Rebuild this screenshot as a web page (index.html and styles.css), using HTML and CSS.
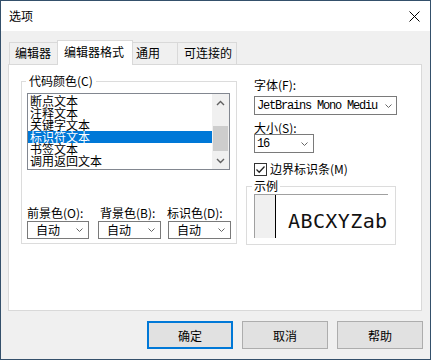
FILE: index.html
```html
<!DOCTYPE html>
<html lang="zh-CN">
<head>
<meta charset="utf-8">
<title>选项</title>
<link rel="stylesheet" href="styles.css">
</head>
<body>
<div class="window">
  <div class="titlebar">
    <span class="title">选项</span>
    <svg class="close" width="11" height="11" viewBox="0 0 11 11"><path d="M0.5 0.5L10.5 10.5M10.5 0.5L0.5 10.5" stroke="#000" stroke-width="1" fill="none"/></svg>
  </div>
  <div class="content">
    <div class="tabs">
      <div class="tab t1">编辑器</div>
      <div class="tab active t2">编辑器格式</div>
      <div class="tab t3">通用</div>
      <div class="tab t4">可连接的</div>
    </div>
    <div class="panel">
      <fieldset class="group colors">
        <legend>代码颜色(C)</legend>
        <div class="listbox">
          <ul class="items">
            <li>断点文本</li>
            <li>注释文本</li>
            <li>关键字文本</li>
            <li class="selected">标识符文本</li>
            <li>书签文本</li>
            <li>调用返回文本</li>
          </ul>
          <div class="scrollbar">
            <div class="sb-btn"><svg width="9" height="6" viewBox="0 0 9 6"><path d="M1 5L4.5 1.5L8 5" stroke="#606060" stroke-width="1.4" fill="none"/></svg></div>
            <div class="sb-track"><div class="sb-thumb"></div></div>
            <div class="sb-btn"><svg width="9" height="6" viewBox="0 0 9 6"><path d="M1 1L4.5 4.5L8 1" stroke="#606060" stroke-width="1.4" fill="none"/></svg></div>
          </div>
        </div>
        <div class="pickers">
          <div class="picker p1">
            <div class="plabel">前景色(O):</div>
            <div class="combo ccombo"><span>自动</span><svg width="7" height="4" viewBox="0 0 7 4"><path d="M0.5 0.5L3.5 3.5L6.5 0.5" stroke="#666" fill="none"/></svg></div>
          </div>
          <div class="picker p2">
            <div class="plabel">背景色(B):</div>
            <div class="combo ccombo"><span>自动</span><svg width="7" height="4" viewBox="0 0 7 4"><path d="M0.5 0.5L3.5 3.5L6.5 0.5" stroke="#666" fill="none"/></svg></div>
          </div>
          <div class="picker p3">
            <div class="plabel">标识色(D):</div>
            <div class="combo ccombo"><span>自动</span><svg width="7" height="4" viewBox="0 0 7 4"><path d="M0.5 0.5L3.5 3.5L6.5 0.5" stroke="#666" fill="none"/></svg></div>
          </div>
        </div>
      </fieldset>
      <div class="right">
        <div class="rlabel">字体(F):</div>
        <div class="combo fcombo"><span class="mono">JetBrains Mono Mediu</span><svg width="7" height="4" viewBox="0 0 7 4"><path d="M0.5 0.5L3.5 3.5L6.5 0.5" stroke="#666" fill="none"/></svg></div>
        <div class="rlabel size-label">大小(S):</div>
        <div class="combo scombo"><span class="mono">16</span><svg width="7" height="4" viewBox="0 0 7 4"><path d="M0.5 0.5L3.5 3.5L6.5 0.5" stroke="#666" fill="none"/></svg></div>
        <div class="check-row">
          <span class="checkbox"><svg width="11" height="11" viewBox="0 0 11 11"><path d="M1.5 5.5L4.2 8.2L9.5 2.5" stroke="#222" stroke-width="1.3" fill="none"/></svg></span>
          <span>边界标识条(M)</span>
        </div>
        <fieldset class="group sample">
          <legend>示例</legend>
          <div class="preview">
            <div class="gutter"></div>
            <div class="code">ABCXYZab</div>
          </div>
        </fieldset>
      </div>
    </div>
    <div class="buttons">
      <button class="btn default">确定</button>
      <button class="btn">取消</button>
      <button class="btn">帮助</button>
    </div>
  </div>
</div>
</body>
</html>
```
FILE: styles.css
```css
html, body {
  margin: 0;
  padding: 0;
  background: #fff;
}

.window {
  width: 431px;
  height: 360px;
  box-sizing: border-box;
  border: 1px solid #34506b;
  display: flex;
  flex-direction: column;
  font-family: "Noto Sans CJK SC", sans-serif;
  font-size: 12px;
  line-height: 14px;
  color: #000;
}

.titlebar {
  height: 30px;
  flex: none;
  background: #fff;
  display: flex;
  align-items: center;
  justify-content: space-between;
  padding: 0 10px 0 8px;
}

.title {
  line-height: 14px;
}

.content {
  flex: 1;
  background: #f0f0f0;
  padding: 9px 7px 0 7px;
  display: flex;
  flex-direction: column;
}

.tabs {
  display: flex;
  align-items: flex-end;
  height: 24px;
  padding-left: 1px;
  flex: none;
}

.tab {
  box-sizing: border-box;
  height: 22px;
  border: 1px solid #d9d9d9;
  border-bottom: none;
  background: #f0f0f0;
  line-height: 20px;
  white-space: nowrap;
}

.t1 { width: 50px; padding-left: 5px; }
.t2 { width: 76px; padding-left: 6px; margin-left: -2px; }
.t3 { width: 47px; padding-left: 4px; margin-left: -2px; }
.t4 { width: 60px; padding-left: 6px; margin-left: -1px; }

.tab.active {
  height: 25px;
  margin-bottom: -1px;
  background: #fff;
  line-height: 22px;
  position: relative;
  z-index: 2;
}

.panel {
  box-sizing: border-box;
  width: 414px;
  height: 247px;
  flex: none;
  border: 1px solid #d9d9d9;
  background: #fff;
  display: flex;
  align-items: flex-start;
  padding: 8px 0 0 12px;
  position: relative;
  z-index: 1;
}

.group {
  margin: 0;
  border: 1px solid #dcdcdc;
  min-width: 0;
  box-sizing: border-box;
}

.group legend {
  font-size: 12px;
}

.colors {
  width: 216px;
  padding: 4px 5px 4px 5px;
}

.colors legend {
  line-height: 16px;
  padding: 0 3px;
  margin-left: -1px;
}

.listbox {
  box-sizing: border-box;
  width: 203px;
  height: 77px;
  border: 1px solid #828790;
  display: flex;
  background: #fff;
}

.items {
  list-style: none;
  margin: 0;
  padding: 1px 0 0 0;
  flex: 1;
  overflow: hidden;
}

.items li {
  height: 12px;
  line-height: 12px;
  padding-left: 2px;
  white-space: nowrap;
}

.items li.selected {
  background: #0078d7;
  color: #fff;
}

.scrollbar {
  width: 17px;
  background: #f0f0f0;
  display: flex;
  flex-direction: column;
}

.sb-btn {
  height: 17px;
  display: flex;
  align-items: center;
  justify-content: center;
}

.sb-track {
  flex: 1;
  padding-top: 15px;
}

.sb-thumb {
  height: 25px;
  margin: 0 1px;
  background: #cdcdcd;
}

.pickers {
  display: flex;
  margin-top: 36px;
}

.picker {
  display: flex;
  flex-direction: column;
}

.p1 { width: 71px; }
.p2 { width: 70px; }

.plabel {
  line-height: 14px;
  white-space: nowrap;
}

.p2 .plabel { margin-left: 2px; }
.p3 .plabel { margin-left: -1px; }

.combo {
  box-sizing: border-box;
  border: 1px solid #7a7a7a;
  background: #fff;
  display: flex;
  align-items: center;
  justify-content: space-between;
}

.ccombo {
  margin-top: 1px;
  width: 62px;
  height: 18px;
  padding: 0 5px 0 8px;
}

.p2 .ccombo, .p3 .ccombo { width: 63px; }

.right {
  margin-left: 17px;
  padding-top: 5px;
  display: flex;
  flex-direction: column;
  align-items: flex-start;
}

.rlabel {
  line-height: 14px;
}

.fcombo {
  margin-top: 4px;
  width: 143px;
  height: 19px;
  padding: 0 4px 0 2px;
}

.mono {
  font-family: "Liberation Mono", monospace;
  font-size: 12px;
  letter-spacing: -1.2px;
  white-space: nowrap;
}

.size-label {
  margin-top: 6px;
  line-height: 13px;
}

.scombo {
  width: 60px;
  height: 19px;
  padding: 0 5px 0 2px;
}

.check-row {
  margin-top: 9px;
  display: flex;
  align-items: center;
  line-height: 14px;
}

.checkbox {
  box-sizing: border-box;
  width: 13px;
  height: 13px;
  border: 1px solid #333;
  background: #fff;
  display: inline-flex;
  margin-right: 3px;
}

.sample {
  margin-top: 4px;
  margin-left: -8px;
  width: 150px;
  padding: 2px 7px 6px 7px;
}

.sample legend {
  line-height: 12px;
  padding: 0 2px;
  margin-left: -2px;
}

.preview {
  box-sizing: border-box;
  width: 134px;
  height: 44px;
  border-top: 1px solid #a0a0a0;
  border-left: 1px solid #a0a0a0;
  display: flex;
  overflow: hidden;
  background: #fff;
}

.gutter {
  width: 20px;
  flex: none;
  background: #f0f0f0;
  border-right: 1px solid #000;
}

.code {
  padding: 16px 0 0 12px;
  font-family: "DejaVu Sans Mono", monospace;
  font-size: 20px;
  line-height: 20px;
  letter-spacing: 0.4px;
  white-space: nowrap;
  color: #111;
}

.buttons {
  display: flex;
  justify-content: flex-end;
  gap: 9px;
  margin-top: 10px;
}

.btn {
  box-sizing: border-box;
  width: 86px;
  height: 28px;
  background: #e1e1e1;
  border: 1px solid #adadad;
  font-family: "Noto Sans CJK SC", sans-serif;
  font-size: 12px;
  color: #000;
  padding: 0;
  margin: 0;
}

.btn.default {
  border: 2px solid #0078d7;
}
```
